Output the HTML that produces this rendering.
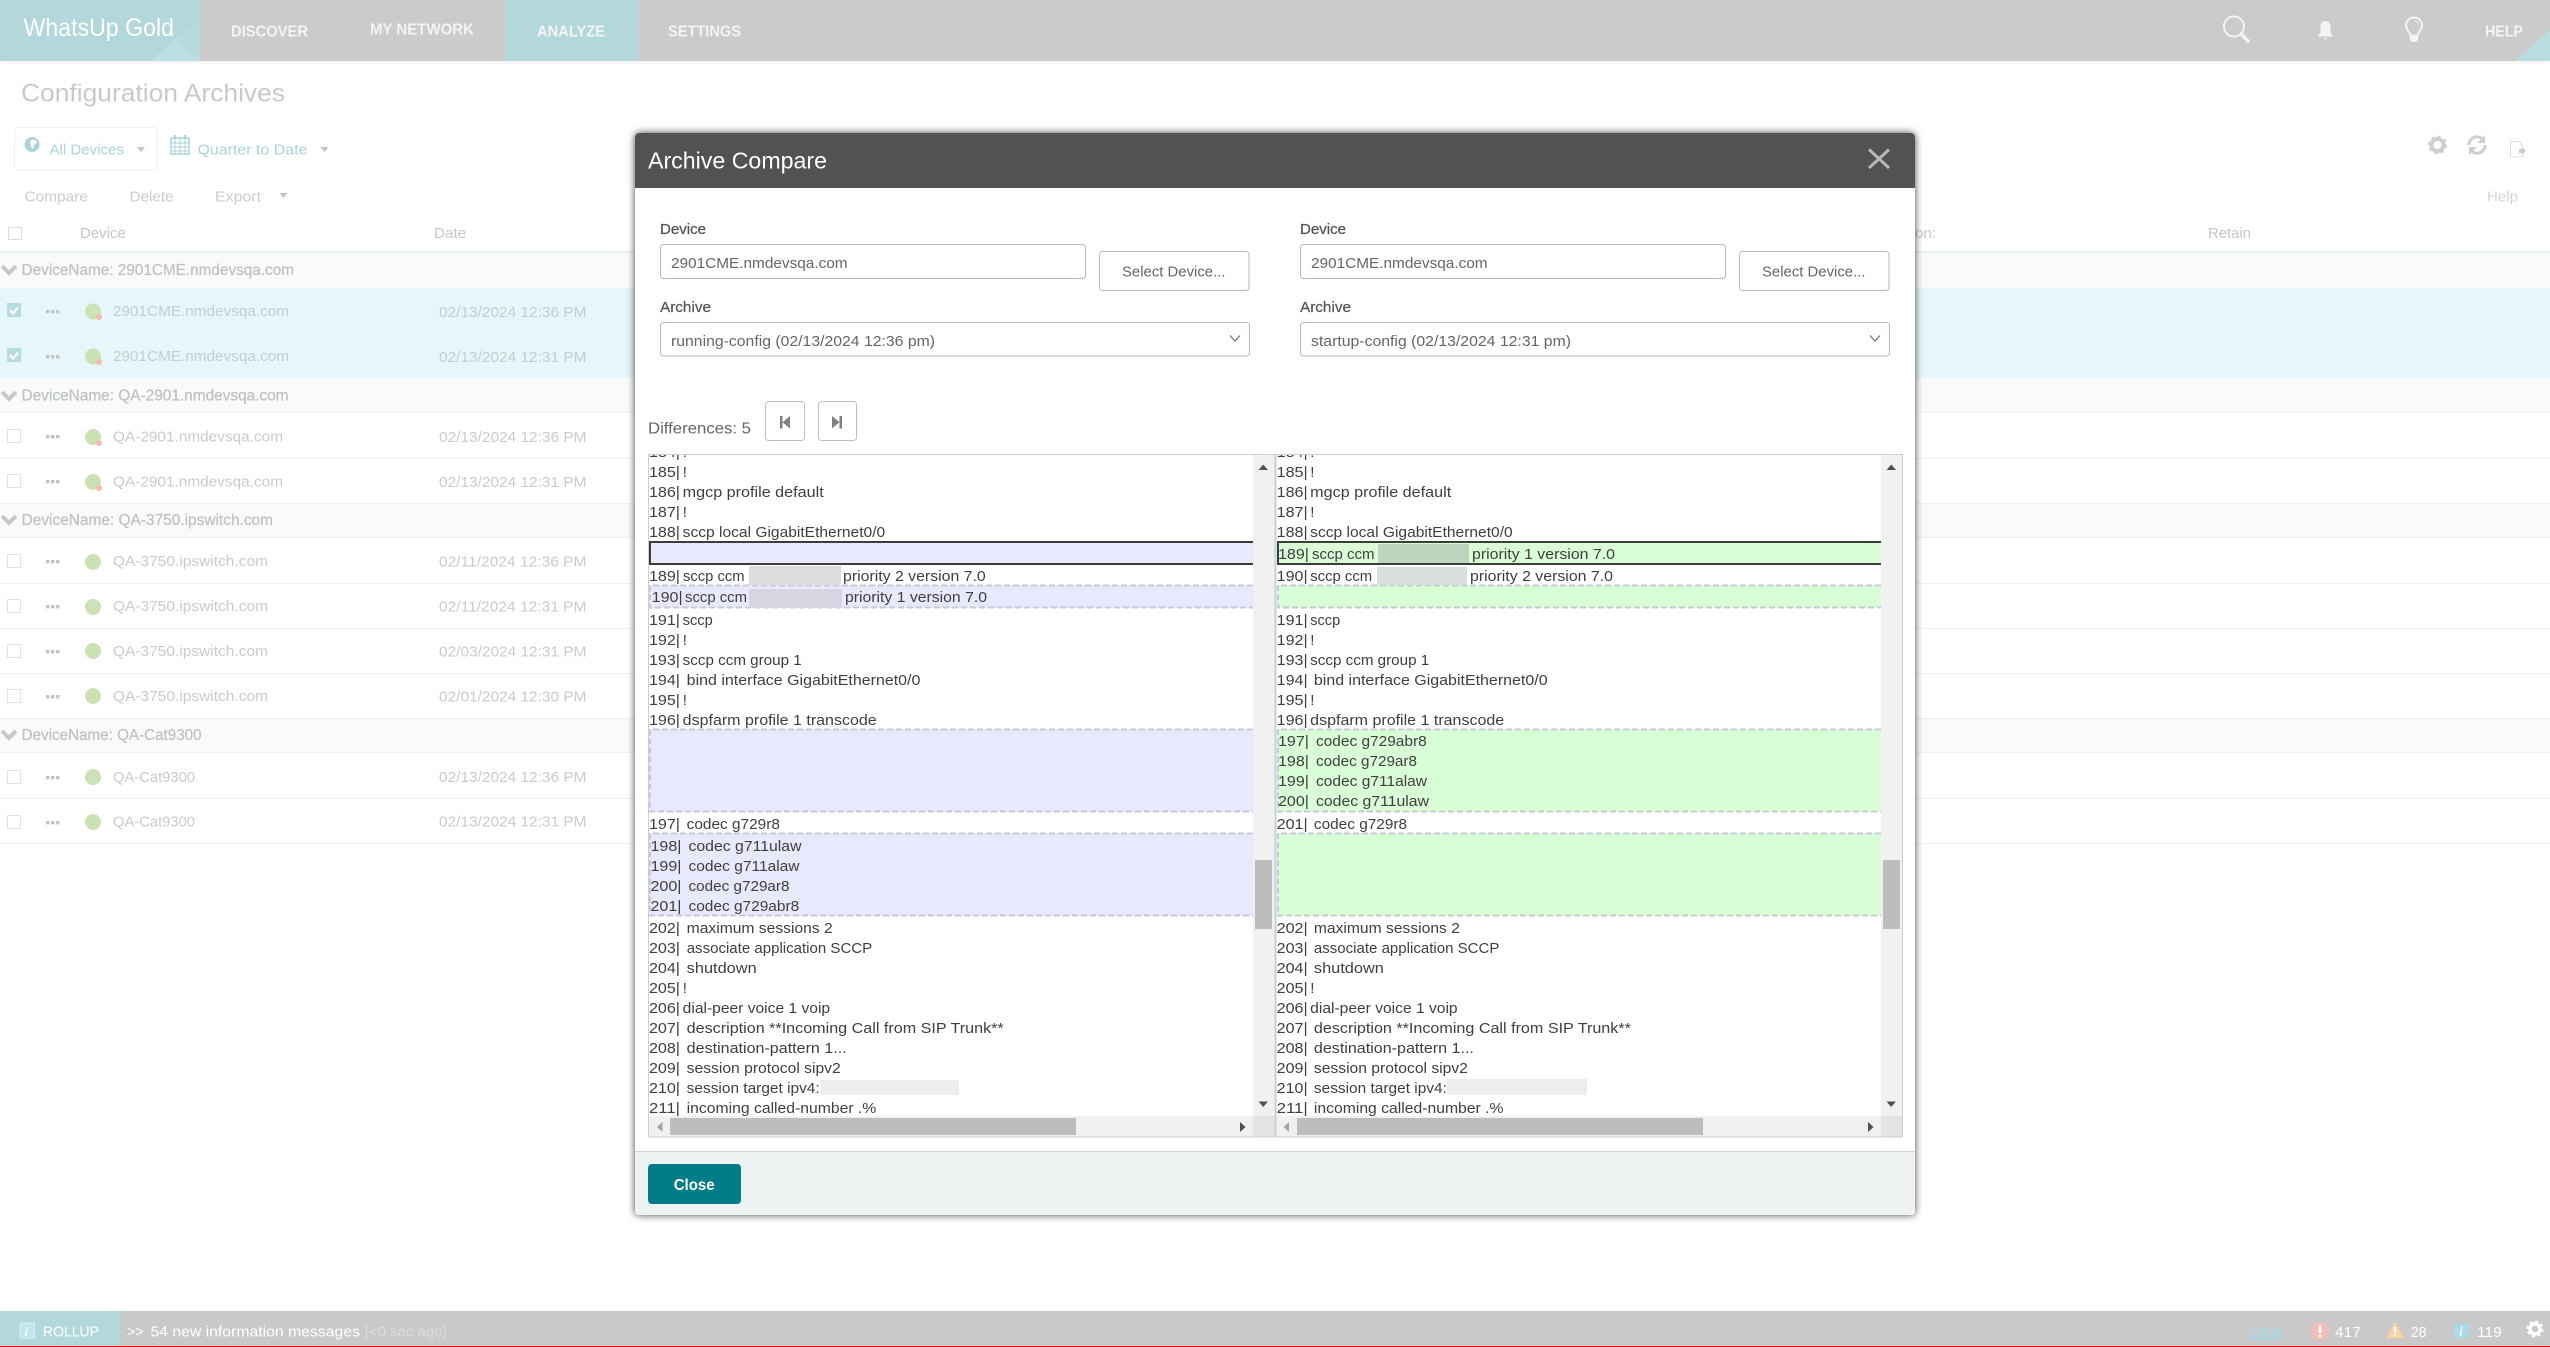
<!DOCTYPE html>
<html lang="en"><head><meta charset="utf-8"><title>Configuration Archives</title>
<style>
html,body{margin:0;padding:0;background:#fff;width:2550px;height:1347px;overflow:hidden}
svg{display:block}
text{font-family:"Liberation Sans",Arial,sans-serif;font-size:15px;white-space:pre;transform:translateY(-1px)}
text.k{transform:none}
.n{fill:#f4f4f4;font-size:16px;font-weight:700}
.h{fill:#c6c6c6}
.g{fill:#bfc2c2;font-size:15.5px;stroke:#bfc2c2;stroke-width:.25}
.r{fill:#cbcbcb}
.s{fill:#c4cdd0}
.t{fill:#a9d5da}
.b{fill:#cccccc}
.l{fill:#555;stroke:#555;stroke-width:.25}
.i{fill:#666}
.d{fill:#3f3f3f}
.f{fill:#fff;font-size:15px}
</style></head><body>
<svg xmlns="http://www.w3.org/2000/svg" width="2550" height="1347" viewBox="0 0 2550 1347">
<defs>
<filter id="ms" x="-5%" y="-5%" width="110%" height="110%"><feDropShadow dx="0" dy="0" stdDeviation="4" flood-color="#000" flood-opacity=".75"/></filter>
<filter id="hs" x="-1%" y="-20%" width="102%" height="150%"><feDropShadow dx="0" dy="2" stdDeviation="2" flood-color="#000" flood-opacity=".06"/></filter>
<clipPath id="cl"><rect x="649" y="455" width="604" height="661"/></clipPath>
<clipPath id="cr"><rect x="1276" y="455" width="605" height="661"/></clipPath>
</defs>

<!-- top nav -->
<rect x="0" y="0" width="2550" height="61" fill="#cbcbcb" filter="url(#hs)"/>
<rect x="0" y="0" width="200" height="61" fill="#b2d8db"/>
<polygon points="150,61 175,40 200,61" fill="#bcdfe2"/>
<polygon points="175,40 200,20 200,61" fill="#b7dcdf"/>
<rect x="506" y="0" width="132" height="61" fill="#b2d8db"/>
<polygon points="2515,61 2550,30 2550,61" fill="#b9dcdf"/>
<text class="k" x="23.5" y="36" style="font-size:25px" fill="#fff" textLength="150.5" lengthAdjust="spacingAndGlyphs">WhatsUp Gold</text>
<text class="n" x="231" y="37.5" textLength="77" lengthAdjust="spacingAndGlyphs">DISCOVER</text>
<text class="n" x="370" y="35.5" textLength="104" lengthAdjust="spacingAndGlyphs">MY NETWORK</text>
<text class="n" x="537" y="37.5" textLength="68" lengthAdjust="spacingAndGlyphs">ANALYZE</text>
<text class="n" x="668" y="37.5" textLength="73" lengthAdjust="spacingAndGlyphs">SETTINGS</text>
<text class="n" x="2485" y="37.5" textLength="38" lengthAdjust="spacingAndGlyphs">HELP</text>
<g fill="none" stroke="#f4f4f4">
<circle cx="2234" cy="26.5" r="10" stroke-width="2"/>
<path d="M2241 34L2248 41" stroke-width="3.5" stroke-linecap="round"/>
</g>
<path d="M2325.5 21c-3.500 0-5 2.500-5 5.500v5.500c0 1.500-1.500 2.500-2.500 3.500v1h15v-1c-1-1-2.500-2-2.500-3.500v-5.500c0-3-1.500-5.500-5-5.500zM2323.500 38h4l-2 2z" fill="#f4f4f4"/>
<path d="M2414 17.500c-4.500 0-8 3.500-8 8 0 4 3.500 6 4.500 10h7c1-4 4.500-6 4.500-10 0-4.500-3.500-8-8-8z" fill="none" stroke="#f4f4f4" stroke-width="2"/>
<path d="M2410 35.500h8v4c0 1.500-1.500 2.500-4 2.500s-4-1-4-2.500z" fill="#f4f4f4"/>
<path d="M2414 21c2.500 0 4 1.500 4 3.500" fill="none" stroke="#f4f4f4" stroke-width="1"/>

<!-- page head -->
<text class="k" x="21" y="101.500" style="font-size:25px;fill:#c9c9c9" textLength="264" lengthAdjust="spacingAndGlyphs">Configuration Archives</text>
<rect x="14.500" y="127.500" width="143" height="43" rx="3" fill="#fff" stroke="#f1f1f1"/>
<circle cx="32" cy="144.500" r="7.500" fill="#a9d5da"/>
<path d="M30 140.500l5-1 2 3-3 3-1 4-2-3z" fill="#fff"/>
<text class="t" x="49.500" y="155.700" textLength="74.500" lengthAdjust="spacingAndGlyphs">All Devices</text>
<polygon points="137,147 145,147 141,152" fill="#c4c4c4"/>
<g fill="none" stroke="#a9d5da"><rect x="171" y="138" width="18" height="16" stroke-width="1.500"/><path d="M171 143h18M171 147h18M171 151h18M175 138v16M180 138v16M185 138v16" stroke-width="1"/></g>
<path d="M174 135h2v4h-2zM184 135h2v4h-2z" fill="#a9d5da"/>
<text class="t" x="197.500" y="155.700" textLength="110" lengthAdjust="spacingAndGlyphs">Quarter to Date</text>
<polygon points="320.500,147 328.500,147 324.500,152" fill="#c4c4c4"/>
<text class="b" x="24.500" y="202.500" textLength="63.500" lengthAdjust="spacingAndGlyphs">Compare</text>
<text class="b" x="129.600" y="202.500" textLength="44" lengthAdjust="spacingAndGlyphs">Delete</text>
<text class="b" x="215" y="202.500" textLength="46" lengthAdjust="spacingAndGlyphs">Export</text>
<polygon points="279.500,193 287.500,193 283.500,198" fill="#c4c4c4"/>
<text class="b" x="2487" y="202.500" textLength="31" lengthAdjust="spacingAndGlyphs" style="fill:#d6d6d6">Help</text>
<!-- toolbar right icons -->
<circle cx="2437.500" cy="145" r="6" fill="none" stroke="#cfcfcf" stroke-width="4"/>
<circle cx="2437.500" cy="145" r="8" fill="none" stroke="#cfcfcf" stroke-width="3" stroke-dasharray="3 3.280"/>
<path d="M2469 145a8 8 0 0 1 13.500-6M2485 145a8 8 0 0 1-13.500 6" fill="none" stroke="#cfcfcf" stroke-width="3"/>
<path d="M2485 135v8h-8zM2469 155v-8h8z" fill="#cfcfcf"/>
<path d="M2510.500 141.500h8l4 4v11.500h-12z" fill="none" stroke="#dcdcdc"/>
<path d="M2519 149h3v-2l4 4-4 4v-2h-3z" fill="#d0d0d0"/>

<!-- table head -->
<rect x="8.500" y="227.500" width="13" height="12" fill="#fff" stroke="#dcdcdc"/>
<text class="h" x="80" y="239" textLength="45.700" lengthAdjust="spacingAndGlyphs">Device</text>
<text class="h" x="434" y="239" textLength="32" lengthAdjust="spacingAndGlyphs">Date</text>
<text class="h" x="1915" y="239" textLength="21" lengthAdjust="spacingAndGlyphs">on:</text>
<text class="h" x="2208" y="239" textLength="43" lengthAdjust="spacingAndGlyphs">Retain</text>
<rect x="0" y="251" width="2550" height="2" fill="#e6f3f5"/>

<!-- groups + rows backgrounds -->
<g fill="#f9fbfb">
<rect x="0" y="253" width="2550" height="35"/><rect x="0" y="378" width="2550" height="35"/><rect x="0" y="503" width="2550" height="35"/><rect x="0" y="718" width="2550" height="35"/>
</g>
<rect x="0" y="288" width="2550" height="90" fill="#e6f6fa"/>
<g fill="#eef1f2">
<rect x="0" y="412" width="2550" height="1"/><rect x="0" y="458" width="2550" height="1"/><rect x="0" y="503" width="2550" height="1"/><rect x="0" y="537" width="2550" height="1"/><rect x="0" y="583" width="2550" height="1"/><rect x="0" y="628" width="2550" height="1"/><rect x="0" y="673" width="2550" height="1"/><rect x="0" y="718" width="2550" height="1"/><rect x="0" y="752" width="2550" height="1"/><rect x="0" y="798" width="2550" height="1"/><rect x="0" y="843" width="2550" height="1"/>
</g>
<g fill="none" stroke="#c8c8c8" stroke-width="4">
<path d="M2 266l7 7 7-7"/><path d="M2 392l7 7 7-7"/><path d="M2 516l7 7 7-7"/><path d="M2 731l7 7 7-7"/>
</g>
<text class="g" x="21.600" y="276" textLength="272.400" lengthAdjust="spacingAndGlyphs">DeviceName: 2901CME.nmdevsqa.com</text>
<text class="g" x="21.600" y="401.700" textLength="267" lengthAdjust="spacingAndGlyphs">DeviceName: QA-2901.nmdevsqa.com</text>
<text class="g" x="21.600" y="526" textLength="251.400" lengthAdjust="spacingAndGlyphs">DeviceName: QA-3750.ipswitch.com</text>
<text class="g" x="21.600" y="741" textLength="180" lengthAdjust="spacingAndGlyphs">DeviceName: QA-Cat9300</text>

<!-- checkboxes -->
<rect x="7" y="303" width="14" height="14" fill="#b7dbe2"/><path d="M10 310l3 3.500 5-6" fill="none" stroke="#fff" stroke-width="2.200"/>
<rect x="7" y="348" width="14" height="14" fill="#b7dbe2"/><path d="M10 355l3 3.500 5-6" fill="none" stroke="#fff" stroke-width="2.200"/>
<g fill="#fff" stroke="#e2e2e2">
<rect x="7.500" y="429.500" width="13" height="13"/><rect x="7.500" y="474.500" width="13" height="13"/><rect x="7.500" y="554.500" width="13" height="13"/><rect x="7.500" y="599.500" width="13" height="13"/><rect x="7.500" y="644.500" width="13" height="13"/><rect x="7.500" y="689.500" width="13" height="13"/><rect x="7.500" y="770.500" width="13" height="13"/><rect x="7.500" y="815.500" width="13" height="13"/>
</g>
<!-- dots -->
<g fill="#c4c4c4">
<path d="M46 310h3.400v3.400h-3.400zM51 310h3.400v3.400h-3.400zM56 310h3.400v3.400h-3.400z"/>
<path d="M46 355h3.400v3.400h-3.400zM51 355h3.400v3.400h-3.400zM56 355h3.400v3.400h-3.400z"/>
<path d="M46 435h3.400v3.400h-3.400zM51 435h3.400v3.400h-3.400zM56 435h3.400v3.400h-3.400z"/>
<path d="M46 480h3.400v3.400h-3.400zM51 480h3.400v3.400h-3.400zM56 480h3.400v3.400h-3.400z"/>
<path d="M46 560h3.400v3.400h-3.400zM51 560h3.400v3.400h-3.400zM56 560h3.400v3.400h-3.400z"/>
<path d="M46 605h3.400v3.400h-3.400zM51 605h3.400v3.400h-3.400zM56 605h3.400v3.400h-3.400z"/>
<path d="M46 650h3.400v3.400h-3.400zM51 650h3.400v3.400h-3.400zM56 650h3.400v3.400h-3.400z"/>
<path d="M46 695h3.400v3.400h-3.400zM51 695h3.400v3.400h-3.400zM56 695h3.400v3.400h-3.400z"/>
<path d="M46 776h3.400v3.400h-3.400zM51 776h3.400v3.400h-3.400zM56 776h3.400v3.400h-3.400z"/>
<path d="M46 821h3.400v3.400h-3.400zM51 821h3.400v3.400h-3.400zM56 821h3.400v3.400h-3.400z"/>
</g>
<!-- status circles -->
<g fill="#cde2b4">
<circle cx="93" cy="311.500" r="8"/><circle cx="93" cy="356.500" r="8"/><circle cx="93" cy="437" r="8"/><circle cx="93" cy="482" r="8"/><circle cx="93" cy="562" r="8"/><circle cx="93" cy="607" r="8"/><circle cx="93" cy="651" r="8"/><circle cx="93" cy="696" r="8"/><circle cx="93" cy="777" r="8"/><circle cx="93" cy="822" r="8"/>
</g>
<g fill="#f8b9b2">
<circle cx="99" cy="317" r="3"/><circle cx="99" cy="362" r="3"/><circle cx="99" cy="443" r="3"/><circle cx="99" cy="488" r="3"/>
</g>
<!-- rows text -->
<text class="s" x="113" y="317" textLength="176" lengthAdjust="spacingAndGlyphs">2901CME.nmdevsqa.com</text>
<text class="s" x="439" y="318" textLength="147.500" lengthAdjust="spacingAndGlyphs">02/13/2024 12:36 PM</text>
<text class="s" x="113" y="362" textLength="176" lengthAdjust="spacingAndGlyphs">2901CME.nmdevsqa.com</text>
<text class="s" x="439" y="363" textLength="147.500" lengthAdjust="spacingAndGlyphs">02/13/2024 12:31 PM</text>
<text class="r" x="113" y="442.500" textLength="170" lengthAdjust="spacingAndGlyphs">QA-2901.nmdevsqa.com</text>
<text class="r" x="439" y="443" textLength="147.500" lengthAdjust="spacingAndGlyphs">02/13/2024 12:36 PM</text>
<text class="r" x="113" y="487.500" textLength="170" lengthAdjust="spacingAndGlyphs">QA-2901.nmdevsqa.com</text>
<text class="r" x="439" y="488" textLength="147.500" lengthAdjust="spacingAndGlyphs">02/13/2024 12:31 PM</text>
<text class="r" x="113" y="567" textLength="155" lengthAdjust="spacingAndGlyphs">QA-3750.ipswitch.com</text>
<text class="r" x="439" y="567.500" textLength="147.500" lengthAdjust="spacingAndGlyphs">02/11/2024 12:36 PM</text>
<text class="r" x="113" y="612" textLength="155" lengthAdjust="spacingAndGlyphs">QA-3750.ipswitch.com</text>
<text class="r" x="439" y="612.500" textLength="147.500" lengthAdjust="spacingAndGlyphs">02/11/2024 12:31 PM</text>
<text class="r" x="113" y="657" textLength="155" lengthAdjust="spacingAndGlyphs">QA-3750.ipswitch.com</text>
<text class="r" x="439" y="657.500" textLength="147.500" lengthAdjust="spacingAndGlyphs">02/03/2024 12:31 PM</text>
<text class="r" x="113" y="702" textLength="155" lengthAdjust="spacingAndGlyphs">QA-3750.ipswitch.com</text>
<text class="r" x="439" y="702.500" textLength="147.500" lengthAdjust="spacingAndGlyphs">02/01/2024 12:30 PM</text>
<text class="r" x="113" y="783" textLength="82" lengthAdjust="spacingAndGlyphs">QA-Cat9300</text>
<text class="r" x="439" y="783" textLength="147.500" lengthAdjust="spacingAndGlyphs">02/13/2024 12:36 PM</text>
<text class="r" x="113" y="827.500" textLength="82" lengthAdjust="spacingAndGlyphs">QA-Cat9300</text>
<text class="r" x="439" y="827.500" textLength="147.500" lengthAdjust="spacingAndGlyphs">02/13/2024 12:31 PM</text>

<!-- footer bar -->
<rect x="0" y="1311" width="2550" height="35" fill="#c9c9c9"/>
<rect x="0" y="1346" width="2550" height="1" fill="#ff0000"/>
<rect x="0" y="1311" width="120" height="35" fill="#b2d8db"/>
<rect x="20" y="1323" width="14.500" height="15" fill="#bfe6ef" stroke="#d8f1f6"/>
<text class="k" x="24.500" y="1336" style="font-size:13px;font-style:italic;font-weight:700;fill:#fff;font-family:'Liberation Serif',serif">i</text>
<text class="f k" x="43" y="1336.500" textLength="56" lengthAdjust="spacingAndGlyphs">ROLLUP</text>
<text class="f k" x="127" y="1336.500" textLength="16.500" lengthAdjust="spacingAndGlyphs">&gt;&gt;</text>
<text class="f k" x="150.400" y="1336.500" textLength="209.600" lengthAdjust="spacingAndGlyphs">54 new information messages</text>
<text class="f k" x="364.700" y="1336.500" textLength="82" lengthAdjust="spacingAndGlyphs" style="fill:#dcdcdc">[&lt;0 sec ago]</text>
<text class="k" x="2248.700" y="1337" style="fill:#9bdcec;text-decoration:underline" textLength="35.300" lengthAdjust="spacingAndGlyphs">Clear</text>
<circle cx="2320" cy="1331" r="9" fill="#f6bdb7"/>
<rect x="2318.700" y="1325" width="2.600" height="8" fill="#fff"/><rect x="2318.700" y="1334.500" width="2.600" height="2.600" fill="#fff"/>
<text class="f k" x="2335" y="1337" textLength="25.700" lengthAdjust="spacingAndGlyphs">417</text>
<polygon points="2395,1322 2404,1338 2386,1338" fill="#f9d29d"/>
<rect x="2393.800" y="1327" width="2.400" height="6" fill="#fff"/><rect x="2393.800" y="1334" width="2.400" height="2.400" fill="#fff"/>
<text class="f k" x="2410.700" y="1337" textLength="16" lengthAdjust="spacingAndGlyphs">28</text>
<rect x="2454" y="1324" width="15" height="14" fill="#a8dbe6"/>
<text class="k" x="2459" y="1336" style="font-size:13px;font-style:italic;font-weight:700;fill:#fff;font-family:'Liberation Serif',serif">i</text>
<text class="f k" x="2477" y="1337" textLength="24.700" lengthAdjust="spacingAndGlyphs">119</text>
<circle cx="2535" cy="1329" r="5" fill="none" stroke="#fff" stroke-width="3.500"/>
<circle cx="2535" cy="1329" r="7" fill="none" stroke="#fff" stroke-width="3" stroke-dasharray="2.800 2.700"/>

<!-- modal -->
<path d="M639 133h1272a4 4 0 0 1 4 4v1074a4 4 0 0 1-4 4H639a4 4 0 0 1-4-4V137a4 4 0 0 1 4-4z" fill="#fff" filter="url(#ms)"/>
<path d="M639 133h1272a4 4 0 0 1 4 4v51H635v-51a4 4 0 0 1 4-4z" fill="#505254"/>
<path d="M635 1151h1280v60a4 4 0 0 1-4 4H639a4 4 0 0 1-4-4z" fill="#eef2f3"/>
<rect x="635" y="1151" width="1280" height="1" fill="#ccd5d8"/>
<text class="k" x="648" y="168.500" style="font-size:23px;fill:#fff" textLength="179" lengthAdjust="spacingAndGlyphs">Archive Compare</text>
<path d="M1869 149.500L1889 168M1889 149.500L1869 168" stroke="#b6b7b8" stroke-width="3" fill="none"/>

<!-- form left -->
<text class="l" x="660" y="235" textLength="46" lengthAdjust="spacingAndGlyphs">Device</text>
<rect x="660.500" y="244.500" width="425" height="34" rx="3" fill="#fff" stroke="#b0bcc0"/>
<text class="i" x="671" y="269" textLength="176.600" lengthAdjust="spacingAndGlyphs">2901CME.nmdevsqa.com</text>
<rect x="1099.500" y="251.500" width="149.500" height="39" rx="3" fill="#fff" stroke="#b0bcc0"/>
<text class="i" x="1122" y="277.300" textLength="103.500" lengthAdjust="spacingAndGlyphs">Select Device...</text>
<text class="l" x="660" y="313" textLength="51" lengthAdjust="spacingAndGlyphs">Archive</text>
<rect x="660.500" y="322.500" width="589" height="33.500" rx="3" fill="#fff" stroke="#b0bcc0"/>
<text class="i" x="671" y="347" textLength="264" lengthAdjust="spacingAndGlyphs">running-config (02/13/2024 12:36 pm)</text>
<path d="M1230 335.500l5 5.500 5-5.500" fill="none" stroke="#777" stroke-width="1.300"/>
<!-- form right -->
<text class="l" x="1300" y="235" textLength="46" lengthAdjust="spacingAndGlyphs">Device</text>
<rect x="1300.500" y="244.500" width="425" height="34" rx="3" fill="#fff" stroke="#b0bcc0"/>
<text class="i" x="1311" y="269" textLength="176.600" lengthAdjust="spacingAndGlyphs">2901CME.nmdevsqa.com</text>
<rect x="1739.500" y="251.500" width="149.500" height="39" rx="3" fill="#fff" stroke="#b0bcc0"/>
<text class="i" x="1762" y="277.300" textLength="103.500" lengthAdjust="spacingAndGlyphs">Select Device...</text>
<text class="l" x="1300" y="313" textLength="51" lengthAdjust="spacingAndGlyphs">Archive</text>
<rect x="1300.500" y="322.500" width="589" height="33.500" rx="3" fill="#fff" stroke="#b0bcc0"/>
<text class="i" x="1311" y="347" textLength="260" lengthAdjust="spacingAndGlyphs">startup-config (02/13/2024 12:31 pm)</text>
<path d="M1870 335.500l5 5.500 5-5.500" fill="none" stroke="#777" stroke-width="1.300"/>

<!-- differences -->
<text class="i" x="648" y="434.300" style="font-size:15.500px" textLength="103" lengthAdjust="spacingAndGlyphs">Differences: 5</text>
<rect x="765.500" y="401.500" width="39" height="39" rx="3" fill="#fff" stroke="#b8c2c5"/>
<rect x="818.500" y="401.500" width="38" height="39" rx="3" fill="#fff" stroke="#b8c2c5"/>
<path d="M780 416h2.500v12.500H780zM790 416v12.500l-7.500-6.250z" fill="#808080"/>
<path d="M842 416h-2.500v12.500h2.500zM832 416v12.500l7.500-6.250z" fill="#808080"/>

<!-- diff box bg -->
<rect x="648.500" y="454" width="1254" height="683" fill="#fff"/>
<rect x="649" y="541" width="604" height="23" fill="#e9e9fd"/>
<rect x="649" y="585" width="604" height="23" fill="#e9e9fd"/>
<rect x="649" y="729" width="604" height="83" fill="#e9e9fd"/>
<rect x="649" y="833" width="604" height="83" fill="#e9e9fd"/>
<rect x="1277" y="541" width="604" height="23" fill="#d9ffd7"/>
<rect x="1277" y="585" width="604" height="23" fill="#d9ffd7"/>
<rect x="1277" y="729" width="604" height="83" fill="#d9ffd7"/>
<rect x="1277" y="833" width="604" height="83" fill="#d9ffd7"/>
<g fill="none" stroke="#3c3c3c" stroke-width="2">
<path d="M1253 542H650V564H1253"/><path d="M1881 542H1278V564H1881"/>
</g>
<g fill="none" stroke="#c9c9d6" stroke-width="2" stroke-dasharray="6 3">
<path d="M1253 585.500H650V607.500H1253"/><path d="M1253 729.500H650V811.500H1253"/><path d="M1253 833.500H650V915.500H1253"/>
<path d="M1881 585.500H1278V607.500H1881"/><path d="M1881 729.500H1278V811.500H1881"/><path d="M1881 833.500H1278V915.500H1881"/>
</g>
<!-- blurred -->
<rect x="749" y="566" width="92" height="19" fill="#dcdcdc"/>
<rect x="749" y="589" width="93" height="19" fill="#d6d6e3"/>
<rect x="821" y="1080" width="138" height="15" fill="#ededed"/>
<rect x="1378" y="544" width="91" height="19" fill="#bdd5bf"/>
<rect x="1377" y="567" width="90" height="18" fill="#d8dfda"/>
<rect x="1447" y="1079" width="140" height="16" fill="#ededed"/>

<!-- left pane text -->
<g clip-path="url(#cl)" class="d">
<text class="d" x="649" y="458" textLength="31" lengthAdjust="spacingAndGlyphs">184|</text><text class="d" x="682.700" y="458">!</text>
<text class="d" x="649" y="478" textLength="31" lengthAdjust="spacingAndGlyphs">185|</text><text class="d" x="682.700" y="478">!</text>
<text class="d" x="649" y="498" textLength="31" lengthAdjust="spacingAndGlyphs">186|</text><text class="d" x="682.700" y="498" textLength="141" lengthAdjust="spacingAndGlyphs">mgcp profile default</text>
<text class="d" x="649" y="518" textLength="31" lengthAdjust="spacingAndGlyphs">187|</text><text class="d" x="682.700" y="518">!</text>
<text class="d" x="649" y="538" textLength="31" lengthAdjust="spacingAndGlyphs">188|</text><text class="d" x="682.700" y="538" textLength="202.500" lengthAdjust="spacingAndGlyphs">sccp local GigabitEthernet0/0</text>
<text class="d" x="649" y="582" textLength="31" lengthAdjust="spacingAndGlyphs">189|</text><text class="d" x="683" y="582" textLength="61.500" lengthAdjust="spacingAndGlyphs">sccp ccm</text><text class="d" x="843" y="582" textLength="142.700" lengthAdjust="spacingAndGlyphs">priority 2 version 7.0</text>
<text class="d" x="651.700" y="603" textLength="31" lengthAdjust="spacingAndGlyphs">190|</text><text class="d" x="685" y="603" textLength="62" lengthAdjust="spacingAndGlyphs">sccp ccm</text><text class="d" x="845" y="603" textLength="142" lengthAdjust="spacingAndGlyphs">priority 1 version 7.0</text>
<text class="d" x="649" y="626" textLength="31" lengthAdjust="spacingAndGlyphs">191|</text><text class="d" x="682.700" y="626" textLength="30" lengthAdjust="spacingAndGlyphs">sccp</text>
<text class="d" x="649" y="646" textLength="31" lengthAdjust="spacingAndGlyphs">192|</text><text class="d" x="682.700" y="646">!</text>
<text class="d" x="649" y="666" textLength="31" lengthAdjust="spacingAndGlyphs">193|</text><text class="d" x="682.700" y="666" textLength="119" lengthAdjust="spacingAndGlyphs">sccp ccm group 1</text>
<text class="d" x="649" y="686" textLength="31" lengthAdjust="spacingAndGlyphs">194|</text><text class="d" x="686.700" y="686" textLength="233.700" lengthAdjust="spacingAndGlyphs">bind interface GigabitEthernet0/0</text>
<text class="d" x="649" y="706" textLength="31" lengthAdjust="spacingAndGlyphs">195|</text><text class="d" x="682.700" y="706">!</text>
<text class="d" x="649" y="726" textLength="31" lengthAdjust="spacingAndGlyphs">196|</text><text class="d" x="682.700" y="726" textLength="194" lengthAdjust="spacingAndGlyphs">dspfarm profile 1 transcode</text>
<text class="d" x="649" y="830" textLength="31" lengthAdjust="spacingAndGlyphs">197|</text><text class="d" x="686.700" y="830" textLength="93.200" lengthAdjust="spacingAndGlyphs">codec g729r8</text>
<text class="d" x="650.500" y="852" textLength="31" lengthAdjust="spacingAndGlyphs">198|</text><text class="d" x="688.500" y="852" textLength="113" lengthAdjust="spacingAndGlyphs">codec g711ulaw</text>
<text class="d" x="650.500" y="872" textLength="31" lengthAdjust="spacingAndGlyphs">199|</text><text class="d" x="688.500" y="872" textLength="111" lengthAdjust="spacingAndGlyphs">codec g711alaw</text>
<text class="d" x="650.500" y="892" textLength="31" lengthAdjust="spacingAndGlyphs">200|</text><text class="d" x="688.500" y="892" textLength="101" lengthAdjust="spacingAndGlyphs">codec g729ar8</text>
<text class="d" x="650.500" y="912" textLength="31" lengthAdjust="spacingAndGlyphs">201|</text><text class="d" x="688.500" y="912" textLength="110.700" lengthAdjust="spacingAndGlyphs">codec g729abr8</text>
<text class="d" x="649" y="934" textLength="31" lengthAdjust="spacingAndGlyphs">202|</text><text class="d" x="686.700" y="934" textLength="146" lengthAdjust="spacingAndGlyphs">maximum sessions 2</text>
<text class="d" x="649" y="954" textLength="31" lengthAdjust="spacingAndGlyphs">203|</text><text class="d" x="686.700" y="954" textLength="185.500" lengthAdjust="spacingAndGlyphs">associate application SCCP</text>
<text class="d" x="649" y="974" textLength="31" lengthAdjust="spacingAndGlyphs">204|</text><text class="d" x="686.700" y="974" textLength="70" lengthAdjust="spacingAndGlyphs">shutdown</text>
<text class="d" x="649" y="994" textLength="31" lengthAdjust="spacingAndGlyphs">205|</text><text class="d" x="682.700" y="994">!</text>
<text class="d" x="649" y="1014" textLength="31" lengthAdjust="spacingAndGlyphs">206|</text><text class="d" x="682.700" y="1014" textLength="147.400" lengthAdjust="spacingAndGlyphs">dial-peer voice 1 voip</text>
<text class="d" x="649" y="1034" textLength="31" lengthAdjust="spacingAndGlyphs">207|</text><text class="d" x="686.700" y="1034" textLength="317" lengthAdjust="spacingAndGlyphs">description **Incoming Call from SIP Trunk**</text>
<text class="d" x="649" y="1054" textLength="31" lengthAdjust="spacingAndGlyphs">208|</text><text class="d" x="686.700" y="1054" textLength="160" lengthAdjust="spacingAndGlyphs">destination-pattern 1...</text>
<text class="d" x="649" y="1074" textLength="31" lengthAdjust="spacingAndGlyphs">209|</text><text class="d" x="686.700" y="1074" textLength="154" lengthAdjust="spacingAndGlyphs">session protocol sipv2</text>
<text class="d" x="649" y="1094" textLength="31" lengthAdjust="spacingAndGlyphs">210|</text><text class="d" x="686.700" y="1094" textLength="133" lengthAdjust="spacingAndGlyphs">session target ipv4:</text>
<text class="d" x="649" y="1114" textLength="31" lengthAdjust="spacingAndGlyphs">211|</text><text class="d" x="686.700" y="1114" textLength="189.600" lengthAdjust="spacingAndGlyphs">incoming called-number .%</text>
</g>

<!-- right pane text -->
<g clip-path="url(#cr)">
<text class="d" x="1276.700" y="458" textLength="31" lengthAdjust="spacingAndGlyphs">184|</text><text class="d" x="1310.200" y="458">!</text>
<text class="d" x="1276.700" y="478" textLength="31" lengthAdjust="spacingAndGlyphs">185|</text><text class="d" x="1310.200" y="478">!</text>
<text class="d" x="1276.700" y="498" textLength="31" lengthAdjust="spacingAndGlyphs">186|</text><text class="d" x="1310.200" y="498" textLength="141" lengthAdjust="spacingAndGlyphs">mgcp profile default</text>
<text class="d" x="1276.700" y="518" textLength="31" lengthAdjust="spacingAndGlyphs">187|</text><text class="d" x="1310.200" y="518">!</text>
<text class="d" x="1276.700" y="538" textLength="31" lengthAdjust="spacingAndGlyphs">188|</text><text class="d" x="1310.200" y="538" textLength="202.500" lengthAdjust="spacingAndGlyphs">sccp local GigabitEthernet0/0</text>
<text class="d" x="1278" y="560" textLength="31" lengthAdjust="spacingAndGlyphs">189|</text><text class="d" x="1312" y="560" textLength="62.500" lengthAdjust="spacingAndGlyphs">sccp ccm</text><text class="d" x="1472" y="560" textLength="143" lengthAdjust="spacingAndGlyphs">priority 1 version 7.0</text>
<text class="d" x="1276.700" y="582" textLength="31" lengthAdjust="spacingAndGlyphs">190|</text><text class="d" x="1310.200" y="582" textLength="62" lengthAdjust="spacingAndGlyphs">sccp ccm</text><text class="d" x="1470" y="582" textLength="143" lengthAdjust="spacingAndGlyphs">priority 2 version 7.0</text>
<text class="d" x="1276.700" y="626" textLength="31" lengthAdjust="spacingAndGlyphs">191|</text><text class="d" x="1310.200" y="626" textLength="30" lengthAdjust="spacingAndGlyphs">sccp</text>
<text class="d" x="1276.700" y="646" textLength="31" lengthAdjust="spacingAndGlyphs">192|</text><text class="d" x="1310.200" y="646">!</text>
<text class="d" x="1276.700" y="666" textLength="31" lengthAdjust="spacingAndGlyphs">193|</text><text class="d" x="1310.200" y="666" textLength="119" lengthAdjust="spacingAndGlyphs">sccp ccm group 1</text>
<text class="d" x="1276.700" y="686" textLength="31" lengthAdjust="spacingAndGlyphs">194|</text><text class="d" x="1313.900" y="686" textLength="233.700" lengthAdjust="spacingAndGlyphs">bind interface GigabitEthernet0/0</text>
<text class="d" x="1276.700" y="706" textLength="31" lengthAdjust="spacingAndGlyphs">195|</text><text class="d" x="1310.200" y="706">!</text>
<text class="d" x="1276.700" y="726" textLength="31" lengthAdjust="spacingAndGlyphs">196|</text><text class="d" x="1310.200" y="726" textLength="194" lengthAdjust="spacingAndGlyphs">dspfarm profile 1 transcode</text>
<text class="d" x="1278" y="747" textLength="31" lengthAdjust="spacingAndGlyphs">197|</text><text class="d" x="1316" y="747" textLength="110.700" lengthAdjust="spacingAndGlyphs">codec g729abr8</text>
<text class="d" x="1278" y="767" textLength="31" lengthAdjust="spacingAndGlyphs">198|</text><text class="d" x="1316" y="767" textLength="101" lengthAdjust="spacingAndGlyphs">codec g729ar8</text>
<text class="d" x="1278" y="787" textLength="31" lengthAdjust="spacingAndGlyphs">199|</text><text class="d" x="1316" y="787" textLength="111" lengthAdjust="spacingAndGlyphs">codec g711alaw</text>
<text class="d" x="1278" y="807" textLength="31" lengthAdjust="spacingAndGlyphs">200|</text><text class="d" x="1316" y="807" textLength="113" lengthAdjust="spacingAndGlyphs">codec g711ulaw</text>
<text class="d" x="1276.700" y="830" textLength="31" lengthAdjust="spacingAndGlyphs">201|</text><text class="d" x="1313.900" y="830" textLength="93.200" lengthAdjust="spacingAndGlyphs">codec g729r8</text>
<text class="d" x="1276.700" y="934" textLength="31" lengthAdjust="spacingAndGlyphs">202|</text><text class="d" x="1313.900" y="934" textLength="146" lengthAdjust="spacingAndGlyphs">maximum sessions 2</text>
<text class="d" x="1276.700" y="954" textLength="31" lengthAdjust="spacingAndGlyphs">203|</text><text class="d" x="1313.900" y="954" textLength="185.500" lengthAdjust="spacingAndGlyphs">associate application SCCP</text>
<text class="d" x="1276.700" y="974" textLength="31" lengthAdjust="spacingAndGlyphs">204|</text><text class="d" x="1313.900" y="974" textLength="70" lengthAdjust="spacingAndGlyphs">shutdown</text>
<text class="d" x="1276.700" y="994" textLength="31" lengthAdjust="spacingAndGlyphs">205|</text><text class="d" x="1310.200" y="994">!</text>
<text class="d" x="1276.700" y="1014" textLength="31" lengthAdjust="spacingAndGlyphs">206|</text><text class="d" x="1310.200" y="1014" textLength="147.400" lengthAdjust="spacingAndGlyphs">dial-peer voice 1 voip</text>
<text class="d" x="1276.700" y="1034" textLength="31" lengthAdjust="spacingAndGlyphs">207|</text><text class="d" x="1313.900" y="1034" textLength="317" lengthAdjust="spacingAndGlyphs">description **Incoming Call from SIP Trunk**</text>
<text class="d" x="1276.700" y="1054" textLength="31" lengthAdjust="spacingAndGlyphs">208|</text><text class="d" x="1313.900" y="1054" textLength="160" lengthAdjust="spacingAndGlyphs">destination-pattern 1...</text>
<text class="d" x="1276.700" y="1074" textLength="31" lengthAdjust="spacingAndGlyphs">209|</text><text class="d" x="1313.900" y="1074" textLength="154" lengthAdjust="spacingAndGlyphs">session protocol sipv2</text>
<text class="d" x="1276.700" y="1094" textLength="31" lengthAdjust="spacingAndGlyphs">210|</text><text class="d" x="1313.900" y="1094" textLength="133" lengthAdjust="spacingAndGlyphs">session target ipv4:</text>
<text class="d" x="1276.700" y="1114" textLength="31" lengthAdjust="spacingAndGlyphs">211|</text><text class="d" x="1313.900" y="1114" textLength="189.600" lengthAdjust="spacingAndGlyphs">incoming called-number .%</text>
</g>

<!-- scrollbars -->
<rect x="1253" y="455" width="22" height="661" fill="#f1f1f1"/>
<rect x="1881" y="455" width="21" height="661" fill="#f1f1f1"/>
<rect x="649" y="1116" width="604" height="21" fill="#f1f1f1"/>
<rect x="1276" y="1116" width="605" height="21" fill="#f1f1f1"/>
<rect x="1253" y="1116" width="22" height="21" fill="#e3e3e3"/>
<rect x="1881" y="1116" width="21" height="21" fill="#e3e3e3"/>
<rect x="1255" y="860" width="17" height="69" fill="#bdbdbd"/>
<rect x="1883" y="860" width="17" height="69" fill="#bdbdbd"/>
<rect x="670" y="1118" width="406" height="17" fill="#bdbdbd"/>
<rect x="1297" y="1118" width="406" height="17" fill="#bdbdbd"/>
<g fill="#505050">
<polygon points="1258.500,470 1268,470 1263.200,464.500"/>
<polygon points="1886.500,470 1896,470 1891.200,464.500"/>
<polygon points="1258.500,1101.500 1268,1101.500 1263.200,1107"/>
<polygon points="1886.500,1101.500 1896,1101.500 1891.200,1107"/>
<polygon points="1240,1122 1240,1132 1245.500,1127"/>
<polygon points="1868,1122 1868,1132 1873.500,1127"/>
</g>
<g fill="#a3a3a3">
<polygon points="662.500,1122 662.500,1132 657,1127"/>
<polygon points="1289,1122 1289,1132 1283.500,1127"/>
</g>
<!-- diff box border -->
<rect x="648.500" y="454.500" width="1254" height="682.500" fill="none" stroke="#c5d1d4"/>
<rect x="1274.500" y="455" width="2" height="682" fill="#c5d1d4"/>

<!-- close -->
<rect x="648" y="1164" width="93" height="40" rx="4" fill="#017c89"/>
<text class="k" x="673.700" y="1190" style="font-size:16px;font-weight:700;fill:#fff" textLength="41" lengthAdjust="spacingAndGlyphs">Close</text>
</svg>
</body></html>
